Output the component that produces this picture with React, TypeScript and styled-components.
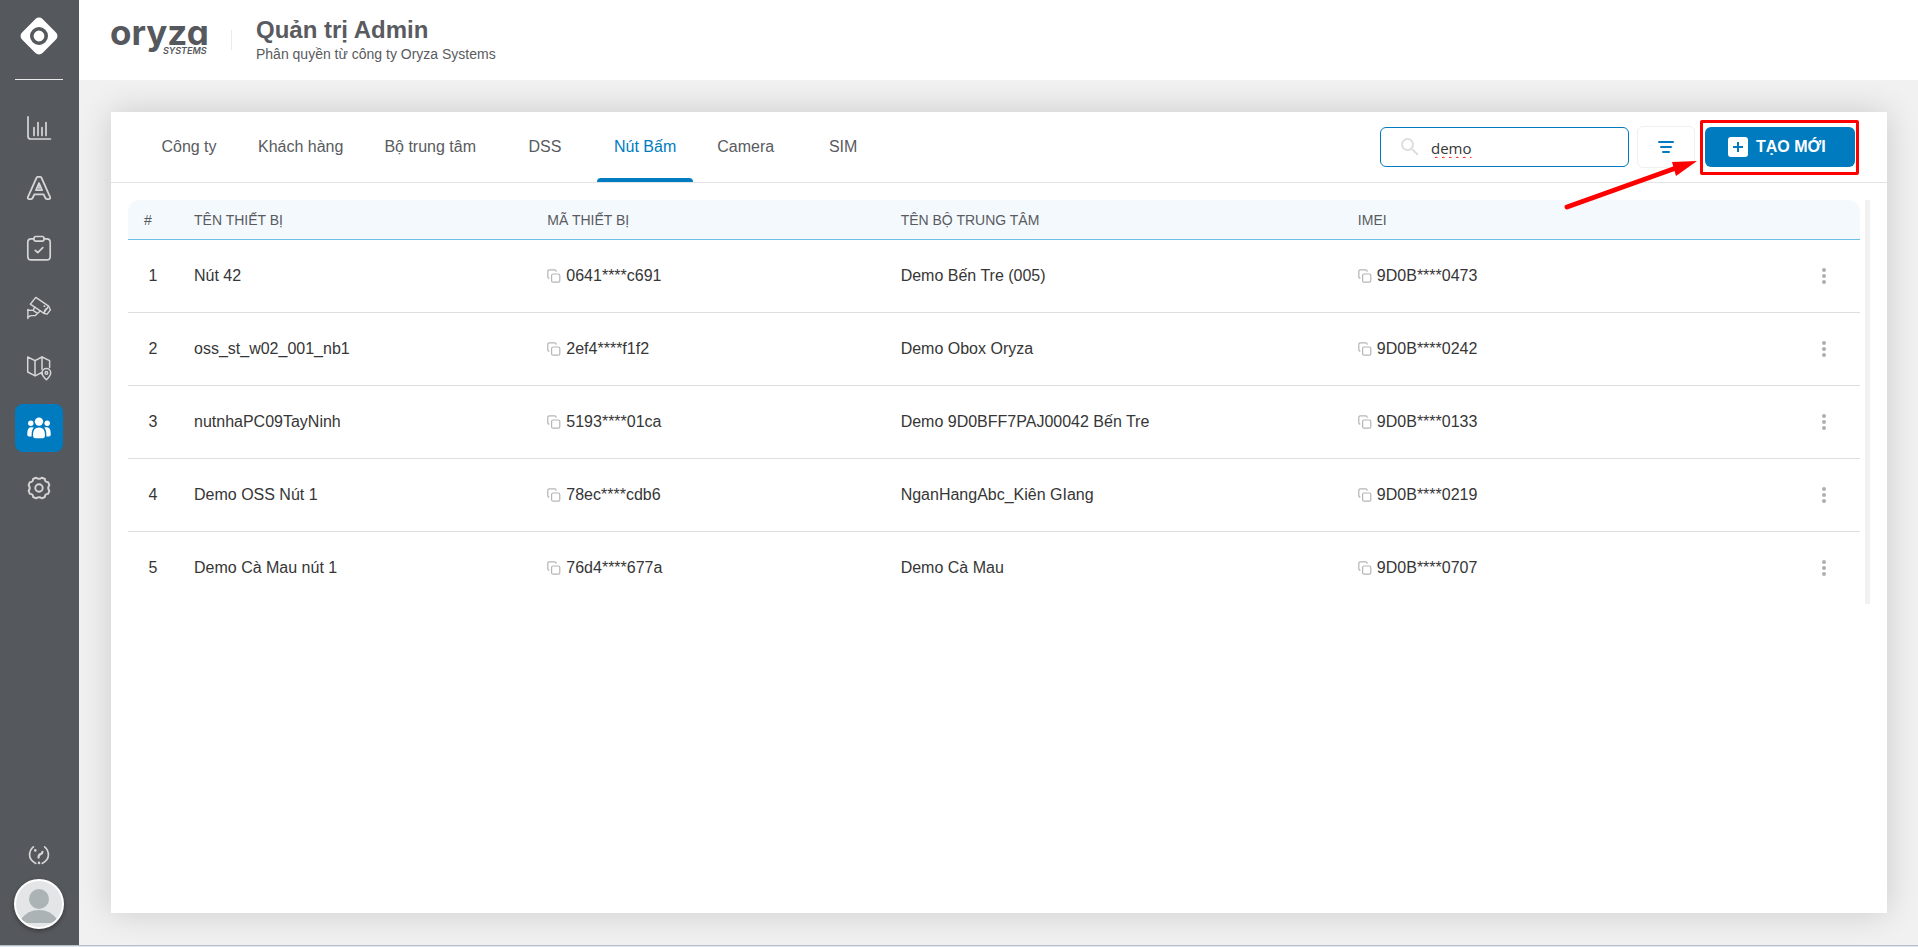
import React, { useState } from "react";
import styled, { createGlobalStyle, css } from "styled-components";
import { MdSearch } from "react-icons/md";

const color = {
  rail: "#55585c",
  railIcon: "#d6d6d6",
  primary: "#007bc0",
  text: "#363636",
  muted: "#595b60",
  line: "#e3e4e6",
  canvas: "#f1f1f1",
  head: "#f4f9fe",
  headLine: "#72bfe6",
  mark: "#ff0000",
};

const GlobalStyle = createGlobalStyle`
  *, *::before, *::after { box-sizing: border-box; }
  body {
    margin: 0;
    background: ${color.canvas};
    color: ${color.text};
    font-family: "Liberation Sans", Arial, sans-serif;
    font-size: 16px;
    line-height: 24px;
  }
  button, input { font: inherit; color: inherit; }
`;

const Page = styled.div`
  display: flex;
  flex-direction: column;
  min-height: 100vh;
`;

const Shell = styled.div`
  display: grid;
  grid-template-columns: 79px minmax(0, 1fr);
  flex: 1;
`;

const BottomStrip = styled.div`
  height: 2px;
  border-top: 1px solid #b9bcc2;
  background: #dfe8f5;
`;

const Rail = styled.aside`
  display: flex;
  flex-direction: column;
  align-items: center;
  padding: 16px 16px 16px 15px;
  background: ${color.rail};
  color: ${color.railIcon};
`;

const RailLogo = styled.a`
  display: flex;
  width: 40px;
  height: 40px;
`;

const RailRule = styled.hr`
  width: 48px;
  height: 1px;
  margin: 23px 0 24px;
  border: 0;
  background: #e8e8e8;
`;

const RailNav = styled.nav`
  display: flex;
  flex-direction: column;
  gap: 12px;
  flex: 1;
`;

const RailLink = styled.a<{ $active?: boolean }>`
  display: grid;
  place-items: center;
  width: 48px;
  height: 48px;
  border-radius: 8px;
  color: ${(p) => (p.$active ? "#ffffff" : "inherit")};
  background: ${(p) => (p.$active ? color.primary : "transparent")};
`;

const RailFoot = styled.div`
  display: flex;
  flex-direction: column;
  align-items: center;
  gap: 11px;
`;

const PlainButton = styled.button`
  display: grid;
  place-items: center;
  padding: 0;
  border: 0;
  background: none;
  cursor: pointer;
`;

const Avatar = styled(PlainButton)`
  width: 50px;
  height: 50px;
  border: 2px solid #ffffff;
  border-radius: 50%;
  overflow: hidden;
  background: #e3e5e7;
  box-shadow: 0 2px 4px rgba(0, 0, 0, 0.35);
`;

const Column = styled.div`
  display: flex;
  flex-direction: column;
`;

const TopBar = styled.header`
  display: flex;
  align-items: center;
  position: relative;
  z-index: 1;
  height: 80px;
  padding: 0 32px;
  background: #ffffff;
`;

const BrandLogo = styled.a`
  display: flex;
  width: 120px;
  height: 40px;
`;

const BrandRule = styled.span`
  width: 1px;
  height: 20px;
  background: #ececec;
`;

const TitleBlock = styled.div`
  display: flex;
  flex-direction: column;
  padding-left: 24px;
  color: ${color.muted};
`;

const Title = styled.h1`
  margin: 0;
  font-size: 24px;
  line-height: 28px;
`;

const Subtitle = styled.p`
  margin: 0;
  font-size: 14px;
  line-height: 20px;
`;

const Main = styled.main`
  display: flex;
  flex: 1;
  padding: 32px 31px 32px 32px;
`;

const Panel = styled.section`
  flex: 1;
  min-width: 0;
  background: #ffffff;
  box-shadow: 0 0 32px rgba(0, 0, 0, 0.16);
`;

const PanelBar = styled.div`
  display: flex;
  justify-content: space-between;
  align-items: center;
  height: 71px;
  padding: 0 32px 0 30px;
  border-bottom: 1px solid ${color.line};
`;

const Tabs = styled.div`
  display: flex;
  gap: 1px;
  height: 70px;
`;

const Tab = styled.button<{ $active: boolean }>`
  position: relative;
  min-width: 96px;
  padding: 0 20px;
  border: 0;
  background: none;
  color: ${(p) => (p.$active ? color.primary : color.muted)};
  white-space: nowrap;
  cursor: pointer;
  ${(p) =>
    p.$active &&
    css`
      &::after {
        content: "";
        position: absolute;
        left: 3px;
        right: 3px;
        bottom: 0;
        height: 4px;
        border-radius: 4px 4px 0 0;
        background: ${color.primary};
      }
    `}
`;

const Tools = styled.div`
  display: flex;
  align-items: center;
`;

const SearchBox = styled.label`
  display: flex;
  align-items: center;
  gap: 9px;
  width: 249px;
  height: 40px;
  margin-right: 8px;
  padding: 0 12px 0 17px;
  border: 1px solid ${color.primary};
  border-radius: 6px;
  color: #dedede;
`;

const SearchInput = styled.input`
  flex: 1;
  min-width: 0;
  height: 32px;
  padding: 2px 0 0;
  border: 0;
  outline: 0;
  background: none;
  color: ${color.text};
  font-family: "Open Sans", "Noto Sans", sans-serif;
  font-size: 15px;
  text-decoration: underline wavy ${color.mark} 1px;
  text-underline-offset: 2px;
`;

const FilterButton = styled(PlainButton)`
  width: 58px;
  height: 42px;
  margin-right: 10px;
  border: 1px solid #f0f0f0;
  border-radius: 6px;
  color: ${color.primary};
`;

const CreateWrap = styled.div`
  position: relative;
`;

const CreateButton = styled.button`
  display: flex;
  align-items: center;
  gap: 8px;
  width: 150px;
  height: 40px;
  padding: 0 0 0 23px;
  border: 0;
  border-radius: 6px;
  background: ${color.primary};
  color: #ffffff;
  font-weight: 700;
  white-space: nowrap;
  cursor: pointer;
`;

const MarkFrame = styled.span`
  position: absolute;
  inset: -7px -4px -8px -5px;
  border: 3px solid ${color.mark};
  border-radius: 2px;
  pointer-events: none;
`;

const MarkArrow = styled.svg`
  position: absolute;
  left: -145px;
  top: 28px;
  pointer-events: none;
`;

const TableArea = styled.div`
  display: grid;
  grid-template-columns: minmax(0, 1fr) 5px;
  gap: 5px;
  padding: 17px;
`;

const ScrollTrack = styled.div`
  background: #f1f1f1;
`;

const DeviceTable = styled.table`
  width: 100%;
  table-layout: fixed;
  border-collapse: separate;
  border-spacing: 0;
`;

const Col = styled.col<{ $w?: string }>`
  width: ${(p) => p.$w ?? "auto"};
`;

const HeadCell = styled.th`
  height: 40px;
  padding: 0 16px;
  border-bottom: 1px solid ${color.headLine};
  background: ${color.head};
  color: ${color.muted};
  font-size: 14px;
  font-weight: 400;
  text-align: left;
  &:first-child { border-top-left-radius: 12px; }
  &:last-child { border-top-right-radius: 12px; }
`;

const Cell = styled.td<{ $align?: "center" | "right" }>`
  height: 73px;
  padding: 0 16px;
  text-align: ${(p) => p.$align ?? "left"};
`;

const IndexCell = styled(Cell)`
  padding: 0;
`;

const ActionCell = styled(Cell)`
  padding: 0 24px;
`;

const Row = styled.tr`
  &:not(:last-child) > td { border-bottom: 1px solid #dcdee0; }
  &:last-child > td { height: 72px; }
`;

const CopyGroup = styled.span`
  display: flex;
  align-items: center;
  gap: 5px;
`;

const CopyButton = styled(PlainButton)`
  color: #b5b5b5;
`;

const MenuButton = styled(PlainButton)`
  width: 24px;
  height: 24px;
  margin-left: auto;
  color: #aeaeae;
`;

const Line = ({ children, w = 1.4 }: { children: React.ReactNode; w?: number }) => (
  <svg
    width="26"
    height="26"
    viewBox="0 0 26 26"
    fill="none"
    stroke="currentColor"
    strokeWidth={w}
    strokeLinecap="round"
    strokeLinejoin="round"
    aria-hidden="true"
  >
    {children}
  </svg>
);

const ChartIcon = () => (
  <Line w={1.7}>
    <path d="M2 1.8v19.4q0 2.8 2.8 2.8h19.6" />
    <path d="M8 12.5V20.5M12 7.5V20.5M16 12.5V20.5M20 7.5V20.5" />
  </Line>
);

const LetterIcon = () => (
  <Line w={1.8}>
    <path d="M10.6 2.6Q11 1.8 12 1.8h2q1 0 1.4.8l8.6 19.2q.9 2.4-1.5 2.4h-1.2q-1.3 0-1.9-1.2l-1.8-3.7H8.4L6.600 23q-.6 1.200-1.900 1.200H3.500Q1.100 24.200 2 21.800Z" />
    <path d="M13 8.200 10 15.200h6Z" />
    <path d="M13 12v1" />
  </Line>
);

const ClipboardIcon = () => (
  <Line w={1.7}>
    <path d="M7.500 3.800H5.200Q1.800 3.800 1.800 7.200V21.500q0 3.400 3.400 3.400h15.600q3.400 0 3.400-3.400V7.200q0-3.400-3.400-3.400h-2.300" />
    <rect x="8" y="1.500" width="10" height="4.600" rx="1.800" />
    <path d="m9.300 15.300 2.500 2.300 5-5" />
  </Line>
);

const CameraIcon = () => (
  <Line w={1.4}>
    <path d="M9.800 2.400 22.600 11.200 17.600 18.200 4.300 9.200Z" />
    <path d="m22.600 11.200 1.800 3.700-3.200 4.200-3.600-.9" />
    <path d="M21 13.500q-2.500 1-2.600 3.700" />
    <path d="m8.600 12.200-1.500 3.200 4.400 3 2.700-2.400M7.100 15.400l-5.200-.2M11.500 18.400 9.300 20.600H5.200L1.900 22" />
    <path d="M1.900 14.500v9.100" />
    <path d="M18.400 11.200h.1" strokeWidth="1.800" />
  </Line>
);

const MapIcon = () => (
  <Line w={1.5}>
    <path d="M16 19.400 15.800 17.300 9.200 20.800 1.700 17V2L9 5.600 16 2l7.600 3.600v7" />
    <path d="M9 5.600v15M16 2v12.500" />
    <path d="M20.400 24.800q-4.300-4.300-4.300-6.900a4.300 4.300 0 0 1 8.600 0q0 2.600-4.300 6.900Z" />
    <circle cx="20.400" cy="17.900" r="1.300" />
  </Line>
);

const GearIcon = () => (
  <Line w={1.9}>
    <path d="M10.200 2.700Q13 5 15.800 2.700L18.900 4Q18.800 7.300 22.100 7.100L23.400 10.200Q21 13 23.400 15.800L22.100 18.900Q18.800 18.700 18.900 22L15.800 23.300Q13 21 10.200 23.300L7.100 22Q7.200 18.700 3.900 18.900L2.600 15.800Q5 13 2.600 10.200L3.900 7.100Q7.200 7.300 7.100 4Z" />
    <circle cx="13" cy="13" r="3.700" />
  </Line>
);

const PeopleIcon = () => (
  <svg width="26" height="26" viewBox="0 0 26 26" fill="currentColor" aria-hidden="true">
    <circle cx="13" cy="6.600" r="4.200" />
    <circle cx="4.800" cy="8.200" r="2.700" />
    <circle cx="21.200" cy="8.200" r="2.700" />
    <path d="M7 20.500Q6.700 12.400 13 12.400T19 20.500Q19 23 17 23.200H9Q7 23 7 20.500Z" />
    <path d="M7.800 12.600Q5.400 15 5.600 21.400H2.800Q1.200 21.400 1.200 19.600 1 12.400 5 12.200 6.600 12 7.800 12.600Z" />
    <path d="M18.200 12.600Q20.600 15 20.400 21.400h2.800q1.600 0 1.600-1.800.2-7.200-3.800-7.400-1.600-.2-2.800.4Z" />
  </svg>
);

const HelpIcon = () => (
  <Line w={1.7}>
    <path d="M7.400 4.800Q3.600 8 3.600 13t6.200 8.400M18.600 4.800Q22.400 8 22.400 13t-6.200 8.400" />
    <path d="M9.300 8.400v.1M13 20.800v.1" strokeWidth="2.600" />
    <path d="M16.500 9.800q0 1.800-1.900 2.300-2 .6-2.100 3.500" strokeWidth="2.200" />
  </Line>
);

const CopyIcon = () => (
  <svg width="14" height="14" viewBox="0 0 14 14" fill="none" stroke="currentColor" strokeWidth="1.200" aria-hidden="true">
    <rect x="4.600" y="5" width="8.200" height="8.200" rx="1.500" />
    <path d="M2.400 9.200Q.8 9.200.8 7.600V2.400Q.8.800 2.400.8h5.200q1.600 0 1.600 1.600v.4" />
  </svg>
);

const navItems = [
  { label: "Thống kê", Icon: ChartIcon },
  { label: "Báo động", Icon: LetterIcon },
  { label: "Nhiệm vụ", Icon: ClipboardIcon },
  { label: "Camera", Icon: CameraIcon },
  { label: "Bản đồ", Icon: MapIcon },
  { label: "Quản trị", Icon: PeopleIcon, active: true },
  { label: "Cài đặt", Icon: GearIcon },
];

const tabs = ["Công ty", "Khách hàng", "Bộ trung tâm", "DSS", "Nút Bấm", "Camera", "SIM"];

const devices = [
  { name: "Nút 42", code: "0641****c691", hub: "Demo Bến Tre (005)", imei: "9D0B****0473" },
  { name: "oss_st_w02_001_nb1", code: "2ef4****f1f2", hub: "Demo Obox Oryza", imei: "9D0B****0242" },
  { name: "nutnhaPC09TayNinh", code: "5193****01ca", hub: "Demo 9D0BFF7PAJ00042 Bến Tre", imei: "9D0B****0133" },
  { name: "Demo OSS Nút 1", code: "78ec****cdb6", hub: "NganHangAbc_Kiên GIang", imei: "9D0B****0219" },
  { name: "Demo Cà Mau nút 1", code: "76d4****677a", hub: "Demo Cà Mau", imei: "9D0B****0707" },
];

const Copyable = ({ value }: { value: string }) => (
  <CopyGroup>
    <CopyButton type="button" aria-label="Sao chép">
      <CopyIcon />
    </CopyButton>
    {value}
  </CopyGroup>
);

const Sidebar = () => (
  <Rail>
    <RailLogo href="#" aria-label="Trang chủ">
      <svg width="40" height="40" viewBox="0 0 40 40" aria-hidden="true">
        <rect x="5.500" y="5.500" width="29" height="29" rx="5" fill="#ffffff" transform="rotate(45 20 20)" />
        <circle cx="20" cy="20" r="7.200" fill="none" stroke={color.rail} strokeWidth="3.600" />
      </svg>
    </RailLogo>
    <RailRule />
    <RailNav>
      {navItems.map(({ label, Icon, active }) => (
        <RailLink key={label} href="#" aria-label={label} $active={active}>
          <Icon />
        </RailLink>
      ))}
    </RailNav>
    <RailFoot>
      <PlainButton type="button" aria-label="Trợ giúp">
        <HelpIcon />
      </PlainButton>
      <Avatar type="button" aria-label="Tài khoản">
        <svg width="46" height="46" viewBox="0 0 46 46" fill="#abb3b5" aria-hidden="true">
          <circle cx="23" cy="18" r="10" />
          <path d="M5 38Q12 29 23 29t18 9Q37 42 34 42H12Q9 42 5 38Z" />
        </svg>
      </Avatar>
    </RailFoot>
  </Rail>
);

export default function App() {
  const [activeTab, setActiveTab] = useState("Nút Bấm");
  const [query, setQuery] = useState("demo");

  return (
    <>
      <GlobalStyle />
      <Page>
        <Shell>
          <Sidebar />
          <Column>
            <TopBar>
              <BrandLogo href="#">
                <svg width="110" height="40" viewBox="0 0 110 40" fill={color.rail} fontFamily="Inter, sans-serif" role="img">
                  <text x="-1" y="25" fontSize="35" fontWeight="700" style={{ fontFeatureSettings: '"cv11"' }}>
                    oryza
                  </text>
                  <text x="52" y="34" fontSize="9" fontWeight="600" fontStyle="italic">
                    SYSTEMS
                  </text>
                </svg>
              </BrandLogo>
              <BrandRule />
              <TitleBlock>
                <Title>Quản trị Admin</Title>
                <Subtitle>Phân quyền từ công ty Oryza Systems</Subtitle>
              </TitleBlock>
            </TopBar>
            <Main>
              <Panel>
                <PanelBar>
                  <Tabs role="tablist">
                    {tabs.map((tab) => (
                      <Tab
                        key={tab}
                        type="button"
                        role="tab"
                        aria-selected={tab === activeTab}
                        $active={tab === activeTab}
                        onClick={() => setActiveTab(tab)}
                      >
                        {tab}
                      </Tab>
                    ))}
                  </Tabs>
                  <Tools>
                    <SearchBox>
                      <MdSearch size={24} aria-hidden="true" />
                      <SearchInput
                        type="text"
                        aria-label="Tìm kiếm"
                        value={query}
                        onChange={(e) => setQuery(e.target.value)}
                      />
                    </SearchBox>
                    <FilterButton type="button" aria-label="Bộ lọc">
                      <svg width="16" height="12" viewBox="0 0 16 12" fill="currentColor" aria-hidden="true">
                        <rect width="16" height="2" rx="1" />
                        <rect x="2" y="5" width="12" height="2" rx="1" />
                        <rect x="4" y="10" width="8" height="2" rx="1" />
                      </svg>
                    </FilterButton>
                    <CreateWrap>
                      <CreateButton type="button">
                        <svg width="20" height="20" viewBox="0 0 20 20" aria-hidden="true">
                          <rect width="20" height="20" rx="3" fill="#ffffff" />
                          <path d="M10 5v10M5 10h10" stroke={color.primary} strokeWidth="2" />
                        </svg>
                        TẠO MỚI
                      </CreateButton>
                      <MarkFrame />
                      <MarkArrow width="140" height="60" viewBox="0 0 140 60" aria-hidden="true">
                        <path d="M7 52 116 13" stroke={color.mark} strokeWidth="5" strokeLinecap="round" />
                        <path d="M112 7 137 6 116 21Z" fill={color.mark} />
                      </MarkArrow>
                    </CreateWrap>
                  </Tools>
                </PanelBar>
                <TableArea>
                  <DeviceTable>
                    <colgroup>
                      <Col $w="50px" />
                      <Col $w="20.4%" />
                      <Col $w="20.4%" />
                      <Col $w="26.4%" />
                      <Col />
                      <Col $w="72px" />
                    </colgroup>
                    <thead>
                      <tr>
                        <HeadCell scope="col">#</HeadCell>
                        <HeadCell scope="col">TÊN THIẾT BỊ</HeadCell>
                        <HeadCell scope="col">MÃ THIẾT BỊ</HeadCell>
                        <HeadCell scope="col">TÊN BỘ TRUNG TÂM</HeadCell>
                        <HeadCell scope="col">IMEI</HeadCell>
                        <HeadCell scope="col" aria-label="Thao tác" />
                      </tr>
                    </thead>
                    <tbody>
                      {devices.map((device, i) => (
                        <Row key={device.code}>
                          <IndexCell $align="center">{i + 1}</IndexCell>
                          <Cell>{device.name}</Cell>
                          <Cell>
                            <Copyable value={device.code} />
                          </Cell>
                          <Cell>{device.hub}</Cell>
                          <Cell>
                            <Copyable value={device.imei} />
                          </Cell>
                          <ActionCell>
                            <MenuButton type="button" aria-label="Tùy chọn">
                              <svg width="4" height="16" viewBox="0 0 4 16" fill="currentColor" aria-hidden="true">
                                <circle cx="2" cy="2" r="2" />
                                <circle cx="2" cy="8" r="2" />
                                <circle cx="2" cy="14" r="2" />
                              </svg>
                            </MenuButton>
                          </ActionCell>
                        </Row>
                      ))}
                    </tbody>
                  </DeviceTable>
                  <ScrollTrack />
                </TableArea>
              </Panel>
            </Main>
          </Column>
        </Shell>
        <BottomStrip />
      </Page>
    </>
  );
}
